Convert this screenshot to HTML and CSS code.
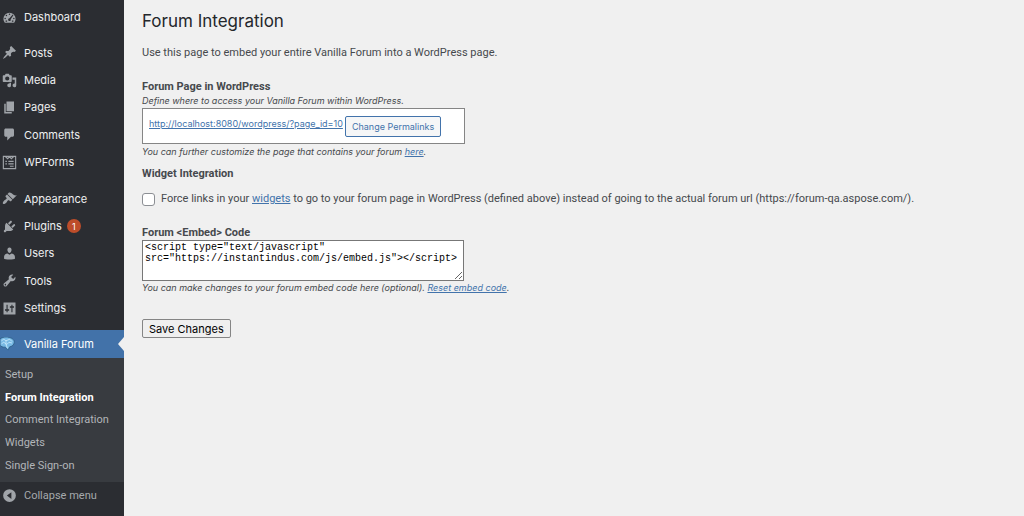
FILE: index.html
```html
<!DOCTYPE html>
<html lang="en">
<head>
<meta charset="utf-8">
<title>Forum Integration</title>
<link rel="stylesheet" href="styles.css">
</head>
<body>
<div class="layout">
  <nav class="sidebar" aria-label="Main menu">
    <div class="group">
      <a class="item" href="#"><svg class="icon" viewBox="0 0 20 20"><path fill-rule="evenodd" d="M3.800 17h12.400c1.200-1.400 1.900-3.200 1.900-5.200a8.100 8.100 0 1 0-16.200 0c0 2 .7 3.800 1.900 5.200zM10 4.600a1 1 0 1 1 0 2 1 1 0 0 1 0-2zM5.900 6.300a1 1 0 1 1 0 2 1 1 0 0 1 0-2zM14.300 6l.9.900-3.600 5.300a1.800 1.800 0 1 1-1.600-1.100zM4.200 10.400a1 1 0 1 1 0 2 1 1 0 0 1 0-2zM15.800 10.400a1 1 0 1 1 0 2 1 1 0 0 1 0-2zM4.800 14h2v1.500h-2zM13.200 14h2v1.500h-2z"/></svg>Dashboard</a>
    </div>
    <div class="group">
      <a class="item" href="#"><svg class="icon" viewBox="0 0 20 20"><path d="M10.440 3.020l1.820-1.820 6.360 6.350-1.830 1.820c-1.050-.68-2.480-.57-3.410.36l-.75.750c-.92.930-1.040 2.350-.35 3.410l-1.830 1.820-2.410-2.410-2.800 2.790c-.42.420-3.380 2.710-3.800 2.290s1.860-3.390 2.280-3.810l2.790-2.790L4.100 9.360l1.830-1.820c1.050.69 2.480.57 3.400-.36l.75-.75c.93-.92 1.050-2.350.36-3.410z"/></svg>Posts</a>
      <a class="item" href="#"><svg class="icon" viewBox="0 0 20 20"><path fill-rule="evenodd" d="M13 11V4c0-.55-.45-1-1-1h-1.670L9 1H5L3.670 3H2c-.55 0-1 .45-1 1v7c0 .55.450 1 1 1h10c.55 0 1-.45 1-1zM7 4.500a2.800 2.800 0 1 1 0 5.600 2.800 2.800 0 0 1 0-5.600zM14 6h5v10.500a2.500 2.500 0 1 1-2-2.450V9h-3zM10 13h2v3.500A2.500 2.500 0 1 1 10 14.050z"/></svg>Media</a>
      <a class="item" href="#"><svg class="icon" viewBox="0 0 20 20"><path d="M6 15V2h10v13H6zM5 16h8v2H3V5h2v11z"/></svg>Pages</a>
      <a class="item" href="#"><svg class="icon" viewBox="0 0 20 20"><path d="M5 2h9c1.100 0 2 .9 2 2v7c0 1.100-.9 2-2 2h-2l-5 5v-5H5c-1.100 0-2-.9-2-2V4c0-1.100.9-2 2-2z"/></svg>Comments</a>
      <a class="item" href="#"><svg class="icon" viewBox="0 0 20 20"><path class="outline" d="M1.800 1.800h16.400v16.400H1.800zM4.500 2l3 3L10 2.500 12.500 5l3-3M4.500 8.500h2M8.500 8.500h7M4.500 11.800h2M8.500 11.800h7M10.500 15h5"/></svg>WPForms</a>
    </div>
    <div class="group">
      <a class="item" href="#"><svg class="icon" viewBox="0 0 20 20"><path d="M14.480 11.060L7.410 3.990l1.500-1.500c.5-.56 2.300-.47 3.510.32 1.210.8 1.430 1.280 2.910 2.100 1.180.64 2.450 1.260 4.450.850zm-.71.710L6.700 4.700 4.930 6.470c-.39.390-.39 1.020 0 1.410l1.060 1.060c.39.390.39 1.030 0 1.420-.6.600-1.430 1.110-2.210 1.690-.35.260-.7.530-1.010.84C1.430 14.230.4 16.080 1.400 17.070c.99 1 2.840-.03 4.180-1.360.31-.31.580-.66.850-1.020.57-.78 1.080-1.610 1.690-2.210.39-.39 1.020-.39 1.410 0l1.060 1.060c.39.390 1.020.39 1.410 0z"/></svg>Appearance</a>
      <a class="item" href="#"><svg class="icon" viewBox="0 0 20 20"><path d="M13.110 4.360L9.870 7.600 8 5.730l3.240-3.240c.35-.34 1.050-.2 1.560.32.520.51.660 1.210.31 1.550zm-8 1.770l.91-1.120 9.010 9.010-1.190.84c-.71.710-2.630 1.160-3.820 1.160H6.140L4.900 17.260c-.59.590-1.540.59-2.120 0-.59-.58-.59-1.530 0-2.120l1.240-1.240v-3.880c0-1.130.4-3.190 1.090-3.890zm7.260 3.970l3.240-3.240c.34-.35 1.040-.21 1.550.31.520.510.660 1.210.31 1.550l-3.240 3.250z"/></svg>Plugins<span class="badge">1</span></a>
      <a class="item" href="#"><svg class="icon" viewBox="0 0 20 20"><path d="M10 9.250c-2.270 0-2.730-3.440-2.730-3.440C7 4.020 7.820 2 9.970 2c2.160 0 2.980 2.020 2.710 3.810 0 0-.41 3.440-2.680 3.440zm0 2.570L12.720 10c2.390 0 4.520 2.330 4.520 4.530v2.490s-3.650 1.130-7.240 1.130c-3.650 0-7.240-1.130-7.240-1.130v-2.490c0-2.250 1.940-4.480 4.470-4.480z"/></svg>Users</a>
      <a class="item" href="#"><svg class="icon" viewBox="0 0 20 20"><path fill-rule="evenodd" d="M16.680 9.770c-1.340 1.340-3.300 1.670-4.950.99l-5.410 6.520c-.99.990-2.590.99-3.580 0s-.99-2.590 0-3.570l6.520-5.420c-.68-1.650-.35-3.610.99-4.950 1.280-1.280 3.120-1.620 4.720-1.060l-2.890 2.890 2.820 2.820 2.860-2.870c.53 1.580.18 3.390-1.080 4.650zM3.810 16.210c.4.390 1.040.39 1.430 0 .4-.4.4-1.040 0-1.430-.39-.4-1.030-.4-1.430 0-.39.390-.39 1.030 0 1.430z"/></svg>Tools</a>
      <a class="item" href="#"><svg class="icon" viewBox="0 0 20 20"><path fill-rule="evenodd" d="M3 2h14c1 0 1 0 1 1v14c0 1 0 1-1 1H3c-1 0-1 0-1-1V3c0-1 0-1 1-1zM6 5v6H4v2h2v2h1.500v-2h2v-2h-2V5zM12.500 5v2h-2v2h2v6H14V9h2V7h-2V5z"/></svg>Settings</a>
    </div>
    <a class="item current" href="#"><svg class="icon brand" viewBox="0 0 20 20"><path class="brand-shape" d="M0 2.500C3 0 9-.8 13 .8c5 1.200 7 4.700 5.500 8-.8 2.700-3.500 4-5.500 4.200L10.500 17.500 7 13.500C4 14 1 12.500 0 11z"/><path class="brand-line" d="M2 5l3-2 3 2 5-2M2 9l3-2 4 3 3-3 4 1M8 5v5l2 5M13 3l3 3"/></svg>Vanilla Forum</a>
    <div class="submenu">
      <a href="#">Setup</a>
      <a class="selected" href="#" aria-current="page">Forum Integration</a>
      <a href="#">Comment Integration</a>
      <a href="#">Widgets</a>
      <a href="#">Single Sign-on</a>
    </div>
    <button class="item collapse" type="button"><svg class="icon" viewBox="0 0 20 20"><path fill-rule="evenodd" d="M10 1.500a8.500 8.500 0 1 1 0 17 8.500 8.500 0 0 1 0-17zM12.500 5.500L6.500 10l6 4.500z"/></svg>Collapse menu</button>
  </nav>
  <main class="content">
    <h1>Forum Integration</h1>
    <p class="intro">Use this page to embed your entire Vanilla Forum into a WordPress page.</p>
    <form>
      <section class="section">
        <h2>Forum Page in WordPress</h2>
        <p class="hint">Define where to access your Vanilla Forum within WordPress.</p>
        <div class="permalink">
          <a href="#">http://localhost:8080/wordpress/?page_id=10</a>
          <button class="secondary" type="button">Change Permalinks</button>
        </div>
        <p class="hint">You can further customize the page that contains your forum <a href="#">here</a>.</p>
      </section>
      <section class="section">
        <h2>Widget Integration</h2>
        <div class="check">
          <input type="checkbox" id="force">
          <label for="force">Force links in your <a href="#">widgets</a> to go to your forum page in WordPress (defined above) instead of going to the actual forum url (https://forum-qa.aspose.com/).</label>
        </div>
      </section>
      <section class="section">
        <h2><label for="embed">Forum &lt;Embed&gt; Code</label></h2>
        <textarea id="embed" spellcheck="false">&lt;script type="text/javascript" src="https://instantindus.com/js/embed.js"&gt;&lt;/script&gt;</textarea>
        <p class="hint">You can make changes to your forum embed code here (optional). <a href="#">Reset embed code</a>.</p>
      </section>
      <button class="save" type="submit">Save Changes</button>
    </form>
  </main>
</div>
</body>
</html>
```
FILE: styles.css
```css
* { box-sizing: border-box; }
body {
  margin: 0;
  background: #f0f0f0;
  color: #46494d;
  font: 11px/16px Roboto, "Liberation Sans", sans-serif;
}
h1, h2, p { margin: 0; }
a { color: #4273ab; }
button, input, textarea { font: inherit; margin: 0; }

.layout { display: flex; min-height: 100vh; }

.sidebar {
  flex: 0 0 124px;
  padding-top: 3px;
  background: #2b2d32;
}
.group { display: grid; grid-auto-rows: 1fr; margin-bottom: 8px; }
.group:first-child { height: 28px; }
.group:not(:first-child) { height: 137px; }
.group:nth-child(2) { margin-bottom: 9px; }
.item {
  display: flex;
  align-items: center;
  gap: 7px;
  padding-left: 2px;
  color: #eeeff0;
  font-family: Inter, "Liberation Sans", sans-serif;
  font-size: 11px;
  text-decoration: none;
}
.icon { flex: none; width: 15px; height: 15px; fill: #a0a4a9; }
.outline { fill: none; stroke: #a0a4a9; stroke-width: 1.5; }
.badge {
  display: grid;
  place-items: center;
  width: 14px;
  height: 14px;
  margin-left: -2px;
  border-radius: 50%;
  background: #bd4d2a;
  color: #fff;
  font-size: 9px;
}
.current {
  position: relative;
  height: 28px;
  padding-left: 0;
  gap: 9px;
  background: #4272a9;
  color: #fff;
}
.current::after {
  content: "";
  position: absolute;
  right: 0;
  top: 7px;
  border: 7px solid transparent;
  border-left: 0;
  border-right: 6px solid #f0f0f0;
}
.brand-shape { fill: #78b9e4; stroke: #28577f; stroke-width: 1; }
.brand-line { fill: none; stroke: #d1efff; stroke-width: 1; }
.submenu {
  display: grid;
  grid-auto-rows: 1fr;
  height: 124px;
  padding: 6px 5px 5px;
  background: #383b40;
}
.submenu a {
  align-self: center;
  color: #b2b5b9;
  text-decoration: none;
  white-space: nowrap;
}
.submenu .selected { color: #fff; font-weight: 700; }
.collapse {
  width: 100%;
  height: 27px;
  border: 0;
  background: none;
  color: #a5a9ad;
  font-family: Roboto, "Liberation Sans", sans-serif;
}

.content { flex: 1; min-width: 0; padding: 10px 18px; }
h1 {
  color: #24272b;
  font: 400 17px/22px Inter, "Liberation Sans", sans-serif;
}
.intro { margin: 13px 0 18px; }
h2 { font-size: 11px; font-weight: 700; line-height: 16px; }
.hint,
.permalink {
  font: 9px/12px Inter, "Liberation Sans", sans-serif;
}
.hint { font-style: italic; }
.permalink {
  display: flex;
  align-items: flex-start;
  gap: 2px;
  max-width: 323px;
  height: 36px;
  margin: 1px 0 2px;
  padding: 7px 6px;
  border: 1px solid #858585;
  background: #fff;
  line-height: 16px;
}
.secondary {
  height: 21px;
  padding: 0 6px;
  border: 1px solid #4273ab;
  border-radius: 2px;
  background: #f5f6f7;
  color: #4273ab;
  white-space: nowrap;
}
.section + .section { margin-top: 8px; }
.check { display: flex; align-items: center; gap: 6px; margin: 9px 0 18px; }
.check input {
  appearance: none;
  flex: none;
  width: 13px;
  height: 13px;
  border: 1px solid #8c8f94;
  border-radius: 3px;
  background: #fff;
}
textarea {
  display: block;
  width: 100%;
  max-width: 322px;
  height: 41px;
  margin: -1px 0 1px;
  padding: 1px 2px;
  border: 1px solid #777;
  background: #fff;
  color: #000;
  font: 10px/11px "Liberation Mono", monospace;
}
.save {
  height: 19px;
  margin-top: 25px;
  padding: 0 6px;
  border: 1px solid #858585;
  border-radius: 2px;
  background: #efefef;
  color: #000;
  font-family: Inter, "Liberation Sans", sans-serif;
  line-height: 16px;
}
```
